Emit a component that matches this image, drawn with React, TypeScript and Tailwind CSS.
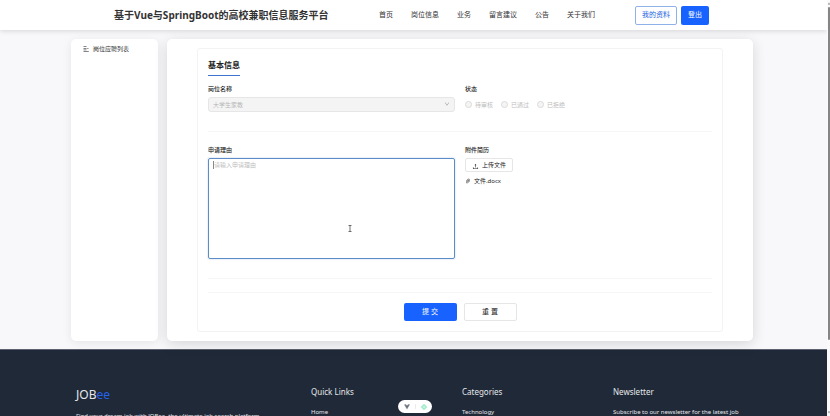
import React, { useState } from 'react';
import { AiOutlineDown, AiOutlinePaperClip, AiOutlineUpload } from 'react-icons/ai';

const NAV_ITEMS = ['首页', '岗位信息', '业务', '留言建议', '公告', '关于我们'];

const STATUS_OPTIONS = [
  { value: 'pending', label: '待审核' },
  { value: 'passed', label: '已通过' },
  { value: 'rejected', label: '已拒绝' },
];

function Header() {
  return (
    <header className="relative z-10 flex h-[30px] items-center gap-10 bg-white pl-[114px] pr-[118px] shadow-[0_1px_5px_rgba(0,0,0,0.14)]">
      <h1 className="mr-auto whitespace-nowrap text-[10px] font-bold leading-[14px] text-[#333]">
        基于Vue与SpringBoot的高校兼职信息服务平台
      </h1>
      <nav className="flex gap-[18px]">
        {NAV_ITEMS.map(item => (
          <a key={item} href="#" className="whitespace-nowrap text-[7px] leading-[10px] text-[#333]">
            {item}
          </a>
        ))}
      </nav>
      <div className="flex gap-1">
        <button className="h-[19px] w-[42px] whitespace-nowrap rounded-[2px] border border-[#8fb0e8] bg-white text-[7px] leading-[10px] text-[#1a5fe0]">
          我的资料
        </button>
        <button className="h-[19px] w-[28px] whitespace-nowrap rounded-[2px] bg-[#1863ff] text-[7px] leading-[10px] text-white">
          登出
        </button>
      </div>
    </header>
  );
}

function Sidebar() {
  return (
    <aside className="w-[87px] shrink-0 rounded-[5px] bg-white pl-3 pt-[5px] shadow-[0_2px_10px_rgba(0,0,0,0.08)]">
      <a href="#" className="flex items-center gap-[4px] text-[6px] leading-[10px] text-[#333]">
        <svg viewBox="0 0 6 6" className="h-[6px] w-[6px]" fill="none" stroke="#666" strokeWidth="0.8">
          <path d="M0.5 0.5h3M0.5 2.5h3M4.2 2.5h1.3M0.5 3.9h3M0.5 5.5h5.3" />
        </svg>
        岗位应聘列表
      </a>
    </aside>
  );
}

function ApplyForm() {
  const [reason, setReason] = useState('');

  return (
    <form
      className="rounded-[3px] border border-[#f3f3f3] px-[10px] pb-[10px] pt-[11px] text-[6px] leading-[10px] text-[#222]"
      onSubmit={e => e.preventDefault()}
    >
      <h2 className="w-fit text-[8px] font-bold leading-[10px] text-[#222]">基本信息</h2>
      <div className="mt-[5px] h-px w-8 bg-[#3f73d0]" />

      <div className="mt-2 grid grid-cols-2 gap-[10px]">
        <div className="flex flex-col gap-[3px]">
          <label htmlFor="job" className="font-medium">岗位名称</label>
          <div className="relative">
            <select
              id="job"
              disabled
              className="block h-[15px] w-full appearance-none rounded-[3px] border border-[#e6e6e6] bg-[#f4f4f4] px-1 text-[6px] leading-[10px] text-[#b5b5b5] opacity-100"
            >
              <option>大学生家教</option>
            </select>
            <AiOutlineDown className="absolute right-[5px] top-1 h-[6px] w-[6px] text-[#999]" />
          </div>
        </div>
        <fieldset disabled>
          <legend className="font-medium">状态</legend>
          <div className="mt-[3px] flex h-[15px] items-center gap-2">
            {STATUS_OPTIONS.map(option => (
              <label key={option.value} className="flex items-center gap-[3px] text-[#bdbdbd]">
                <input
                  type="radio"
                  name="status"
                  value={option.value}
                  className="h-[7px] w-[7px] appearance-none rounded-full border border-[#dadada] bg-[#f5f5f5]"
                />
                {option.label}
              </label>
            ))}
          </div>
        </fieldset>
      </div>

      <hr className="mt-[19px] border-[#f6f6f6]" />

      <div className="mt-[13px] grid grid-cols-2 gap-[10px]">
        <div className="relative flex flex-col gap-[3px]">
          <label htmlFor="reason" className="font-medium">申请理由</label>
          <textarea
            id="reason"
            value={reason}
            onChange={e => setReason(e.target.value)}
            placeholder="请输入申请理由"
            className="block h-[101px] w-full resize-none rounded-[2px] border border-[#5b8cc8] px-[5px] py-[1px] text-[6px] leading-[10px] shadow-[0_0_1px_1px_rgba(91,140,200,0.12)] outline-none placeholder:text-[#bdbdbd]"
          />
          {/* caret */}
          <span className="absolute left-[5px] top-4 h-2 w-px bg-[#888]" />
          {/* mouse pointer */}
          <svg viewBox="0 0 8 14" className="absolute left-[140px] top-20 h-[7px] w-[4px]" fill="none" stroke="#444" strokeWidth="1.5">
            <path d="M1 1h6M4 1v12M1 13h6" />
          </svg>
        </div>
        <div>
          <p className="font-medium">附件简历</p>
          <button
            type="button"
            className="mt-[3px] flex h-[14px] w-[48px] items-center justify-center gap-[3px] whitespace-nowrap rounded-[2px] border border-[#e6e6e6] bg-white"
          >
            <AiOutlineUpload className="mt-[3px] h-[7px] w-[7px]" />
            上传文件
          </button>
          <a href="#" className="mt-[4px] flex w-fit items-center gap-[3px]">
            <AiOutlinePaperClip className="h-[6px] w-[6px] text-[#333]" />
            文件.docx
          </a>
        </div>
      </div>

      <hr className="mt-[19px] border-[#f6f6f6]" />
      <hr className="mt-[13px] border-[#f6f6f6]" />

      <div className="mt-[10px] flex justify-center gap-[7px] text-[7px]">
        <button type="submit" className="h-[18px] w-[53px] rounded-[2px] bg-[#1863ff] text-white">提 交</button>
        <button
          type="reset"
          onClick={() => setReason('')}
          className="h-[18px] w-[53px] rounded-[2px] border border-[#e6e6e6] bg-white"
        >
          重 置
        </button>
      </div>
    </form>
  );
}

function Footer() {
  return (
    <footer className="grid grid-cols-[219fr_135fr_135fr_135fr] gap-4 border-t border-[#5b6270] bg-[#1f2937] pb-10 pl-[76px] pr-[79px] pt-9 text-[6px] leading-[10px] text-[#e5e7eb]">
      <div>
        <h3 className="text-[12px] leading-[18px]">
          JOB<span className="text-[#2563eb]">ee</span>
        </h3>
        <p className="mt-[7px] whitespace-nowrap">Find your dream job with JOBee, the ultimate job search platform</p>
      </div>
      <div>
        <h4 className="text-[8px] leading-[12px]">Quick Links</h4>
        <a href="#" className="mt-[9px] block">Home</a>
      </div>
      <div>
        <h4 className="text-[8px] leading-[12px]">Categories</h4>
        <a href="#" className="mt-[9px] block">Technology</a>
      </div>
      <div>
        <h4 className="text-[8px] leading-[12px]">Newsletter</h4>
        <p className="mt-[9px] whitespace-nowrap">Subscribe to our newsletter for the latest job</p>
      </div>
    </footer>
  );
}

function DevToolsPill() {
  return (
    <div className="fixed bottom-[3px] left-1/2 flex h-[13px] w-[34px] -translate-x-1/2 items-center justify-center gap-[5px] rounded-full bg-white">
      <svg viewBox="0 0 14 12" className="h-[6px] w-[6px]">
        <path d="M0 0h5l2 3 2-3h5L7 12z" fill="#8a9099" />
        <path d="M3 0l4 7 4-7" fill="none" stroke="#555b64" strokeWidth="1.5" />
      </svg>
      <span className="h-[5px] w-px bg-[#ececec]" />
      <svg viewBox="0 0 14 14" className="h-[6px] w-[6px]" fill="none" stroke="#5fe0a8" strokeWidth="1.6">
        <circle cx="7" cy="7" r="4.5" />
        <circle cx="7" cy="7" r="1" />
        <path d="M7 0v3M7 11v3M0 7h3M11 7h3" />
      </svg>
    </div>
  );
}

function Scrollbar() {
  return (
    <div className="flex w-[3px] shrink-0 flex-col items-end bg-[#fafafa]">
      <svg viewBox="0 0 4 4" className="mt-[2px] h-[3px] w-[2px]"><path d="M0 4l2-4 2 4z" fill="#777" /></svg>
      <div className="mt-[2px] h-4/5 w-[2px] rounded-full bg-[#858585]" />
      <svg viewBox="0 0 4 4" className="mb-[2px] mt-auto h-[3px] w-[2px]"><path d="M0 0l2 4 2-4z" fill="#777" /></svg>
    </div>
  );
}

function App() {
  return (
    <div className="flex h-screen w-full overflow-hidden bg-[#f8f8fb] font-['Noto_Sans','Noto_Sans_CJK_SC',sans-serif]">
      <div className="min-w-0 flex-1 overflow-hidden">
        <Header />
        <div className="flex gap-[9px] pb-2 pl-[71px] pr-[74px] pt-[9px]">
          <Sidebar />
          <main className="min-w-0 flex-1 rounded-[5px] bg-white px-[30px] py-[9px] shadow-[0_3px_14px_rgba(0,0,0,0.14)]">
            <ApplyForm />
          </main>
        </div>
        <Footer />
      </div>
      <Scrollbar />
      <DevToolsPill />
    </div>
  );
}

export default App;
